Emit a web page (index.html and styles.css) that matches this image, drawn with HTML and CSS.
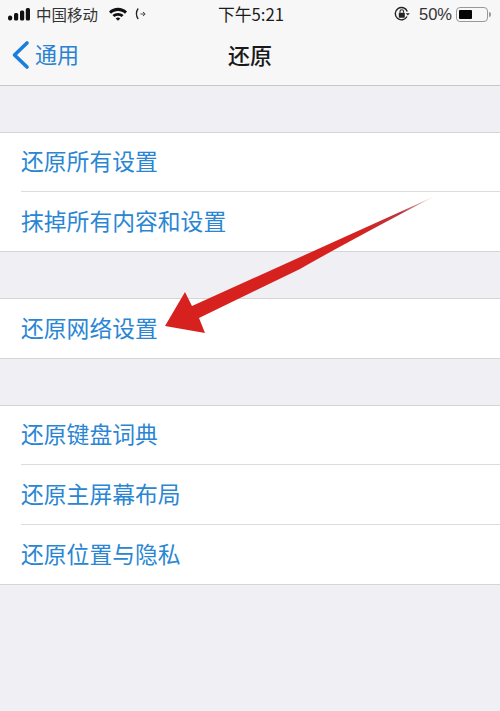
FILE: index.html
```html
<!DOCTYPE html>
<html lang="zh">
<head>
<meta charset="utf-8">
<title>还原</title>
<link rel="stylesheet" href="styles.css">
</head>
<body>
<div class="screen">
  <header class="top">
    <div class="status">
      <div class="status-left">
        <svg class="signal" width="22" height="13" viewBox="0 0 22 13"><rect x="0" y="7.500" width="4.200" height="5" rx="2"/><rect x="6" y="5" width="4.200" height="7.500" rx="1.500"/><rect x="12" y="2.500" width="4.200" height="10" rx="1.500"/><rect x="17.800" y="0" width="4.200" height="12.500" rx="1.500"/></svg>
        <span class="carrier">中国移动</span>
        <svg class="wifi" width="20" height="14" viewBox="0 0 20 14"><path d="M1 4.600C6 -.4 14 -.4 19 4.600L17 6.700C13 3 7 3 3 6.700Z"/><path d="M4.400 8.100C7.600 5.200 12.400 5.200 15.600 8.100L13.600 10.100C11.400 8.300 8.600 8.300 6.400 10.100Z"/><path d="M7.700 11.400C9 10.300 11 10.300 12.300 11.400L10 13.800Z"/></svg>
        <svg class="hook" width="12" height="14" viewBox="0 0 12 14"><path d="M3.200 1.500C.8 4.500.8 9 3.200 12" fill="none" stroke="#222" stroke-width="1.300"/><path d="M5.500 7H9.600M8 5l2.200 2L8 9" fill="none" stroke="#444" stroke-width="1"/></svg>
      </div>
      <span class="time">下午5:21</span>
      <div class="status-right">
        <svg class="lock" width="16" height="16" viewBox="0 0 16 16"><path d="M13 10.500A6.200 6.200 0 1 1 13.300 5.500" fill="none" stroke="#222" stroke-width="1.400"/><path d="M11.800 7.200h4l-2 2.200Z" fill="#222"/><rect x="4.800" y="6.700" width="6" height="5" rx=".8" fill="#222"/><path d="M6 6.800V5.500a1.800 1.800 0 0 1 3.600 0v1.300" fill="none" stroke="#222" stroke-width="1.100"/></svg>
        <span class="percent">50%</span>
        <div class="battery"><div class="battery-level"></div></div>
        <div class="battery-tip"></div>
      </div>
    </div>
    <nav class="nav">
      <div class="back">
        <svg width="20" height="30" viewBox="0 0 20 30"><path d="M16 3L3.500 15L16 27" fill="none" stroke="#1a7de0" stroke-width="3.600" stroke-linecap="round" stroke-linejoin="round"/></svg>
        <span>通用</span>
      </div>
      <h1 class="title">还原</h1>
    </nav>
  </header>
  <main class="content">
    <section class="group">
      <div class="row">还原所有设置</div>
      <div class="row">抹掉所有内容和设置</div>
    </section>
    <section class="group">
      <div class="row">还原网络设置</div>
    </section>
    <section class="group">
      <div class="row">还原键盘词典</div>
      <div class="row">还原主屏幕布局</div>
      <div class="row">还原位置与隐私</div>
    </section>
  </main>
  <svg class="arrow" width="500" height="711" viewBox="0 0 500 711">
    <defs>
      <linearGradient id="shaft" gradientUnits="userSpaceOnUse" x1="165" y1="326" x2="433" y2="197">
        <stop offset="0" stop-color="#d7211f"/>
        <stop offset=".72" stop-color="#d5221f"/>
        <stop offset=".88" stop-color="#b9383f"/>
        <stop offset="1" stop-color="#f0d5d5"/>
      </linearGradient>
    </defs>
    <path d="M165 326L185 292L192 306L433 197Q340 246 300 269L199 318L205 333Z" fill="url(#shaft)"/>
  </svg>
</div>
</body>
</html>
```
FILE: styles.css
```css
* { box-sizing: border-box; }
html, body { margin: 0; padding: 0; }
body {
  width: 500px;
  height: 711px;
  overflow: hidden;
  background: #efeff4;
  font-family: "Noto Sans CJK SC", "Liberation Sans", sans-serif;
}
.screen { position: relative; width: 500px; height: 711px; }
.top {
  height: 86px;
  background: #f7f7f7;
  border-bottom: 1px solid #c6c6c8;
}
.status {
  height: 28px;
  padding: 0 0 0 8px;
  display: flex;
  align-items: center;
  position: relative;
  color: #222;
}
.status-left { display: flex; align-items: center; }
.signal { fill: #111; margin-right: 6px; }
.carrier { font-size: 15.500px; line-height: 28px; color: #333; width: 64px; }
.wifi { fill: #111; margin-left: 8px; }
.hook { margin-left: 7px; }
.time {
  position: absolute;
  left: 0;
  right: 0;
  padding-left: 2px;
  text-align: center;
  font-size: 16.800px;
  line-height: 28px;
  color: #1c1c1c;
}
.status-right {
  margin-left: auto;
  display: flex;
  align-items: center;
  padding-right: 9px;
}
.percent { font-size: 16.500px; line-height: 28px; font-family: "Liberation Sans", sans-serif; margin-left: 9px; color: #333; }
.battery {
  width: 32px;
  height: 15px;
  margin-left: 4px;
  border: 1px solid #999;
  border-radius: 4px;
  padding: 2px;
}
.battery-level { width: 13px; height: 100%; background: #050505; border-radius: 1px; }
.battery-tip { width: 2px; height: 5px; margin-left: 1px; background: #999; border-radius: 0 2px 2px 0; }
.nav {
  height: 57px;
  position: relative;
  display: flex;
  align-items: center;
  justify-content: center;
}
.back {
  position: absolute;
  left: 11px;
  top: 10px;
  display: flex;
  align-items: center;
  color: #2a82d2;
  font-size: 22px;
  line-height: 30px;
}
.back span { margin-left: 4px; }
.back svg { position: relative; top: 2px; }
.title {
  margin: 0 0 6px;
  font-size: 22px;
  font-weight: 500;
  line-height: 30px;
  color: #1a1a1a;
}
.content { display: flex; flex-direction: column; gap: 46px; padding-top: 46px; }
.group {
  background: #fff;
  border-top: 1px solid #d5d5d8;
  border-bottom: 1px solid #d5d5d8;
}
.row {
  height: 59px;
  margin-left: 21px;
  padding-bottom: 3px;
  display: flex;
  align-items: center;
  font-size: 22.800px;
  color: #2a86d3;
  border-bottom: 1px solid #dcdcdc;
}
.row + .row { height: 60px; }
.row:last-child { border-bottom: 0; height: 59px; padding-bottom: 2px; }
.arrow { position: absolute; left: 0; top: 0; pointer-events: none; }
```
